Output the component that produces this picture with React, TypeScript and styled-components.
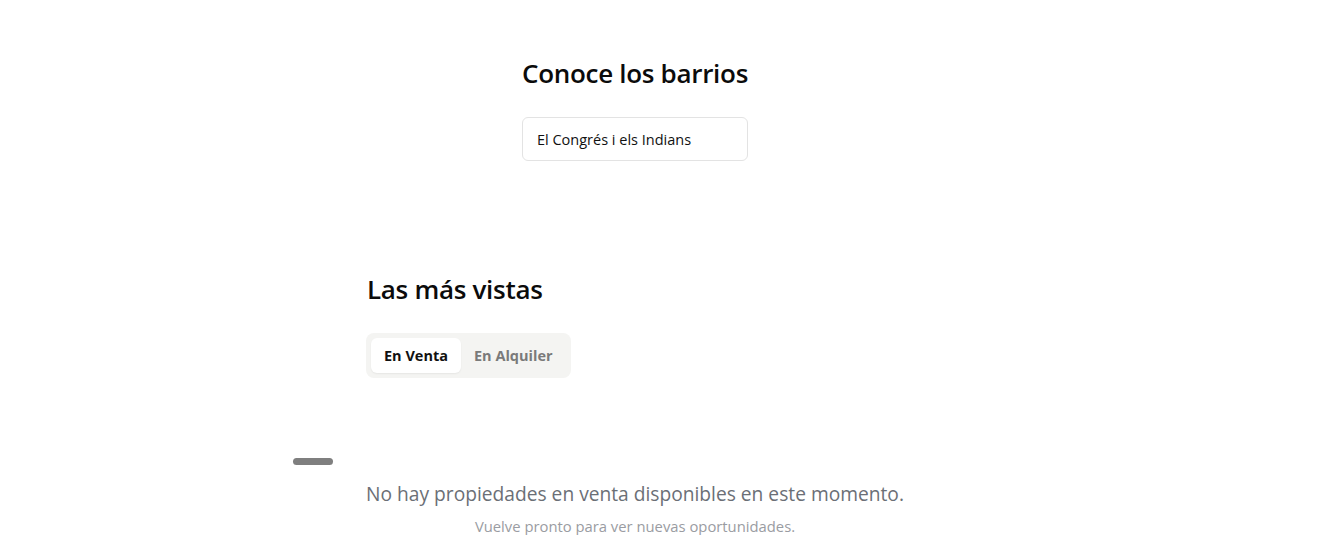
import React, { useState } from "react";
import styled, { createGlobalStyle } from "styled-components";

const GlobalStyle = createGlobalStyle`
  html, body {
    margin: 0;
    padding: 0;
    background: #fff;
    font-family: "Open Sans", "Noto Sans", sans-serif;
    color: #111;
  }
`;

const Page = styled.div`
  width: 1270px;
  display: flex;
  flex-direction: column;
  align-items: center;
`;

const NeighbourhoodSection = styled.section`
  width: 226px;
  padding-top: 56px;
  display: flex;
  flex-direction: column;
`;

const Title = styled.h2`
  margin: 0;
  font-size: 26px;
  font-weight: 600;
  letter-spacing: -0.3px;
  line-height: 34px;
  white-space: nowrap;
  color: #0b0b0b;
`;

const NeighbourhoodSelect = styled.div`
  margin-top: 27px;
  height: 44px;
  box-sizing: border-box;
  border: 1px solid #e3e3e3;
  border-radius: 6px;
  padding: 0 14px;
  display: flex;
  align-items: center;
  font-size: 14.5px;
  color: #111;
`;

const ViewedSection = styled.section`
  position: relative;
  width: 536px;
  margin-top: 111px;
  display: flex;
  flex-direction: column;
`;

const Tabs = styled.div`
  margin-top: 27px;
  align-self: flex-start;
  display: flex;
  padding: 5px;
  background: #f4f4f2;
  border-radius: 8px;
  margin-left: -1px;
`;

const Tab = styled.button<{ $active: boolean }>`
  border: none;
  font-family: inherit;
  font-size: 14.5px;
  font-weight: 700;
  height: 35px;
  padding: 0 13px;
  border-radius: 6px;
  cursor: pointer;
  background: ${({ $active }) => ($active ? "#fff" : "transparent")};
  color: ${({ $active }) => ($active ? "#111" : "#7a7a7a")};
  box-shadow: ${({ $active }) => ($active ? "0 1px 2px rgba(0,0,0,0.06)" : "none")};
`;

const Handle = styled.div`
  position: absolute;
  left: -74px;
  top: 186px;
  width: 40px;
  height: 7px;
  border-radius: 4px;
  background: #7f7f7f;
`;

const Empty = styled.div`
  margin-top: 102px;
  display: flex;
  flex-direction: column;
  align-items: center;
  gap: 10px;
`;

const EmptyTitle = styled.p`
  margin: 0;
  font-size: 19.2px;
  color: #6b6f76;
  white-space: nowrap;
`;

const EmptyText = styled.p`
  margin: 0;
  font-size: 14.8px;
  line-height: 18px;
  color: #9a9ca2;
`;

export default function App() {
  const [tab, setTab] = useState<"venta" | "alquiler">("venta");

  return (
    <>
      <GlobalStyle />
      <Page>
        <NeighbourhoodSection>
          <Title>Conoce los barrios</Title>
          <NeighbourhoodSelect>El Congrés i els Indians</NeighbourhoodSelect>
        </NeighbourhoodSection>

        <ViewedSection>
          <Title>Las más vistas</Title>
          <Tabs>
            <Tab $active={tab === "venta"} onClick={() => setTab("venta")}>
              En Venta
            </Tab>
            <Tab $active={tab === "alquiler"} onClick={() => setTab("alquiler")}>
              En Alquiler
            </Tab>
          </Tabs>
          <Handle />
          <Empty>
            <EmptyTitle>No hay propiedades en venta disponibles en este momento.</EmptyTitle>
            <EmptyText>Vuelve pronto para ver nuevas oportunidades.</EmptyText>
          </Empty>
        </ViewedSection>
      </Page>
    </>
  );
}
